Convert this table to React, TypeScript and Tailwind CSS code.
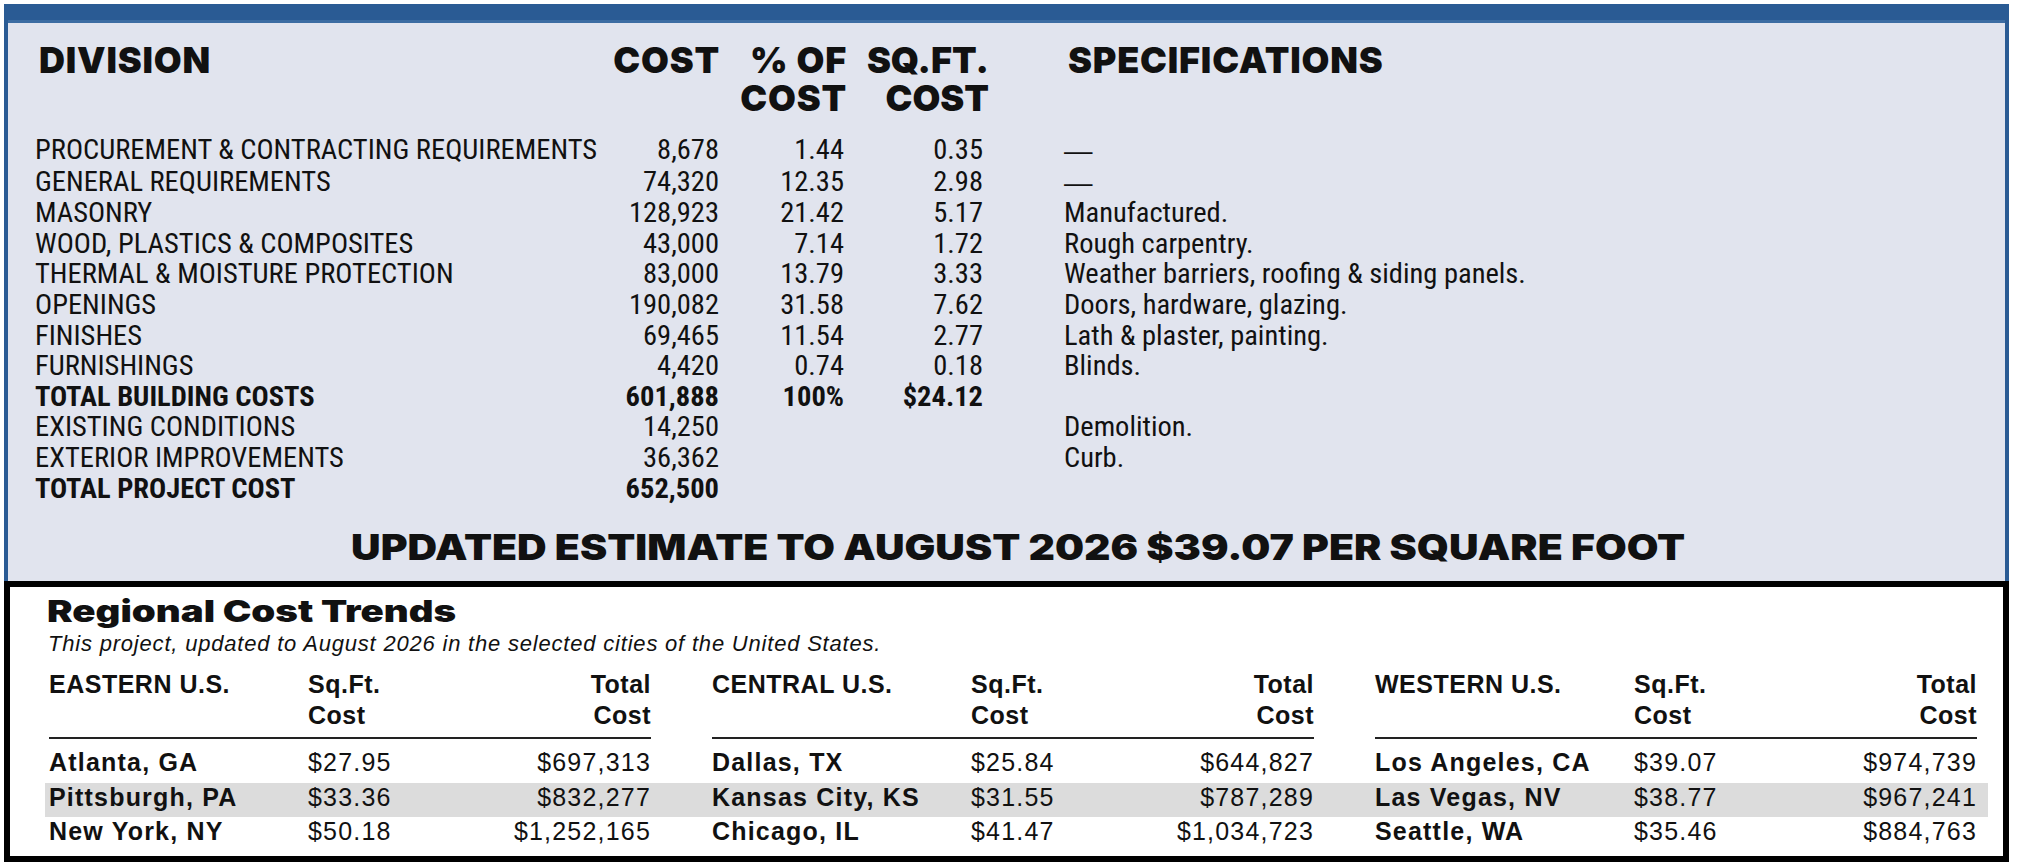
type Row = {
  division: string;
  cost: string;
  pct?: string;
  sqft?: string;
  spec?: string;
  total?: boolean;
};

const rows: Row[] = [
  { division: "PROCUREMENT & CONTRACTING REQUIREMENTS", cost: "8,678", pct: "1.44", sqft: "0.35", spec: "—" },
  { division: "GENERAL REQUIREMENTS", cost: "74,320", pct: "12.35", sqft: "2.98", spec: "—" },
  { division: "MASONRY", cost: "128,923", pct: "21.42", sqft: "5.17", spec: "Manufactured." },
  { division: "WOOD, PLASTICS & COMPOSITES", cost: "43,000", pct: "7.14", sqft: "1.72", spec: "Rough carpentry." },
  { division: "THERMAL & MOISTURE PROTECTION", cost: "83,000", pct: "13.79", sqft: "3.33", spec: "Weather barriers, roofing & siding panels." },
  { division: "OPENINGS", cost: "190,082", pct: "31.58", sqft: "7.62", spec: "Doors, hardware, glazing." },
  { division: "FINISHES", cost: "69,465", pct: "11.54", sqft: "2.77", spec: "Lath & plaster, painting." },
  { division: "FURNISHINGS", cost: "4,420", pct: "0.74", sqft: "0.18", spec: "Blinds." },
  { division: "TOTAL BUILDING COSTS", cost: "601,888", pct: "100%", sqft: "$24.12", total: true },
  { division: "EXISTING CONDITIONS", cost: "14,250", spec: "Demolition." },
  { division: "EXTERIOR IMPROVEMENTS", cost: "36,362", spec: "Curb." },
  { division: "TOTAL PROJECT COST", cost: "652,500", total: true },
];

type City = { name: string; sqft: string; total: string };

const regions: { title: string; cities: City[] }[] = [
  {
    title: "EASTERN U.S.",
    cities: [
      { name: "Atlanta, GA", sqft: "$27.95", total: "$697,313" },
      { name: "Pittsburgh, PA", sqft: "$33.36", total: "$832,277" },
      { name: "New York, NY", sqft: "$50.18", total: "$1,252,165" },
    ],
  },
  {
    title: "CENTRAL U.S.",
    cities: [
      { name: "Dallas, TX", sqft: "$25.84", total: "$644,827" },
      { name: "Kansas City, KS", sqft: "$31.55", total: "$787,289" },
      { name: "Chicago, IL", sqft: "$41.47", total: "$1,034,723" },
    ],
  },
  {
    title: "WESTERN U.S.",
    cities: [
      { name: "Los Angeles, CA", sqft: "$39.07", total: "$974,739" },
      { name: "Las Vegas, NV", sqft: "$38.77", total: "$967,241" },
      { name: "Seattle, WA", sqft: "$35.46", total: "$884,763" },
    ],
  },
];

const heavy = "font-['Inter',sans-serif] font-black";
const narrow = "font-['Roboto_Condensed',sans-serif]";
const sans = "font-['Liberation_Sans',Arial,sans-serif]";

function CostTable() {
  return (
    <div className="pl-[27px] pt-[18px] text-[#111]">
      <div
        className={`grid grid-cols-[565px_120px_127px_142px_1fr] text-[36px] leading-[38px] tracking-[0.8px] ${heavy}`}
      >
        <div className="pl-[4px]">DIVISION</div>
        <div className="text-right">COST</div>
        <div className="text-right">
          % OF
          <br />
          COST
        </div>
        <div className="text-right tracking-normal">
          SQ.FT.
          <br />
          COST
        </div>
        <div className="pl-[79px]">SPECIFICATIONS</div>
      </div>

      <div className={`mt-[18px] text-[28.5px] leading-[30.6px] ${narrow}`}>
        {rows.map((r) => (
          <div
            key={r.division}
            className={`grid grid-cols-[565px_119px_125px_139px_1fr] whitespace-nowrap ${r.total ? "font-bold" : ""}`}
          >
            <div>{r.division}</div>
            <div className="text-right">{r.cost}</div>
            <div className="text-right">{r.pct}</div>
            <div className="text-right">{r.sqft}</div>
            <div className="pl-[81px]">
              {r.spec === "—" ? <span className={sans}>—</span> : r.spec}
            </div>
          </div>
        ))}
      </div>

      <div className={`mt-[23px] pr-[3px] text-center text-[35px] leading-[40px] ${heavy}`}>
        <span className="inline-block origin-center scale-x-[1.17] whitespace-nowrap">
          UPDATED ESTIMATE TO AUGUST 2026 $39.07 PER SQUARE FOOT
        </span>
      </div>
    </div>
  );
}

function RegionalTrends() {
  return (
    <div className="pt-[8px] text-[#111]">
      <div className="pl-[37px]">
        <div className={`text-[30px] leading-[32px] ${heavy}`}>
          <span className="inline-block origin-left scale-x-[1.28] whitespace-nowrap">Regional Cost Trends</span>
        </div>
        <div className={`mt-[5px] pl-[1px] text-[22px] italic leading-[24px] tracking-[0.8px] ${sans}`}>
          This project, updated to August 2026 in the selected cities of the United States.
        </div>
      </div>

      <div className={`ml-[35px] mt-[13px] w-[1943px] text-[25px] ${sans}`}>
        <div className="flex gap-[61px] pl-[4px]">
          {regions.map((g) => (
            <div key={g.title} className="w-[602px]">
              <div className="grid grid-cols-[259px_140px_203px] border-b-2 border-[#222] pb-[6px] font-bold leading-[31px] tracking-[0.5px]">
                <div>{g.title}</div>
                <div>
                  Sq.Ft.
                  <br />
                  Cost
                </div>
                <div className="text-right">
                  Total
                  <br />
                  Cost
                </div>
              </div>
            </div>
          ))}
        </div>

        <div className="mt-[9px]">
          {[0, 1, 2].map((i) => (
            <div
              key={i}
              className={`flex h-[34.5px] gap-[61px] pl-[4px] leading-[28.5px] tracking-[1.2px] ${i === 1 ? "bg-[#dcdcdc]" : ""}`}
            >
              {regions.map((g) => (
                <div key={g.title} className="grid w-[602px] grid-cols-[259px_140px_203px] whitespace-nowrap">
                  <div className="font-bold">{g.cities[i].name}</div>
                  <div>{g.cities[i].sqft}</div>
                  <div className="text-right">{g.cities[i].total}</div>
                </div>
              ))}
            </div>
          ))}
        </div>
      </div>
    </div>
  );
}

export default function App() {
  return (
    <div className="min-h-screen bg-white pl-[4px] pt-[4px]">
      <div className="w-[2005px]">
        <div className="h-[577px] border-x-4 border-[#2a5b94] bg-[#e1e4ee]">
          <div className="h-[16px] bg-[#2a5b94]" />
          <div className="h-[3px] bg-[#3c6ca2]" />
          <CostTable />
        </div>
        <div className="h-[281px] border-[6px] border-black bg-white">
          <RegionalTrends />
        </div>
      </div>
    </div>
  );
}
